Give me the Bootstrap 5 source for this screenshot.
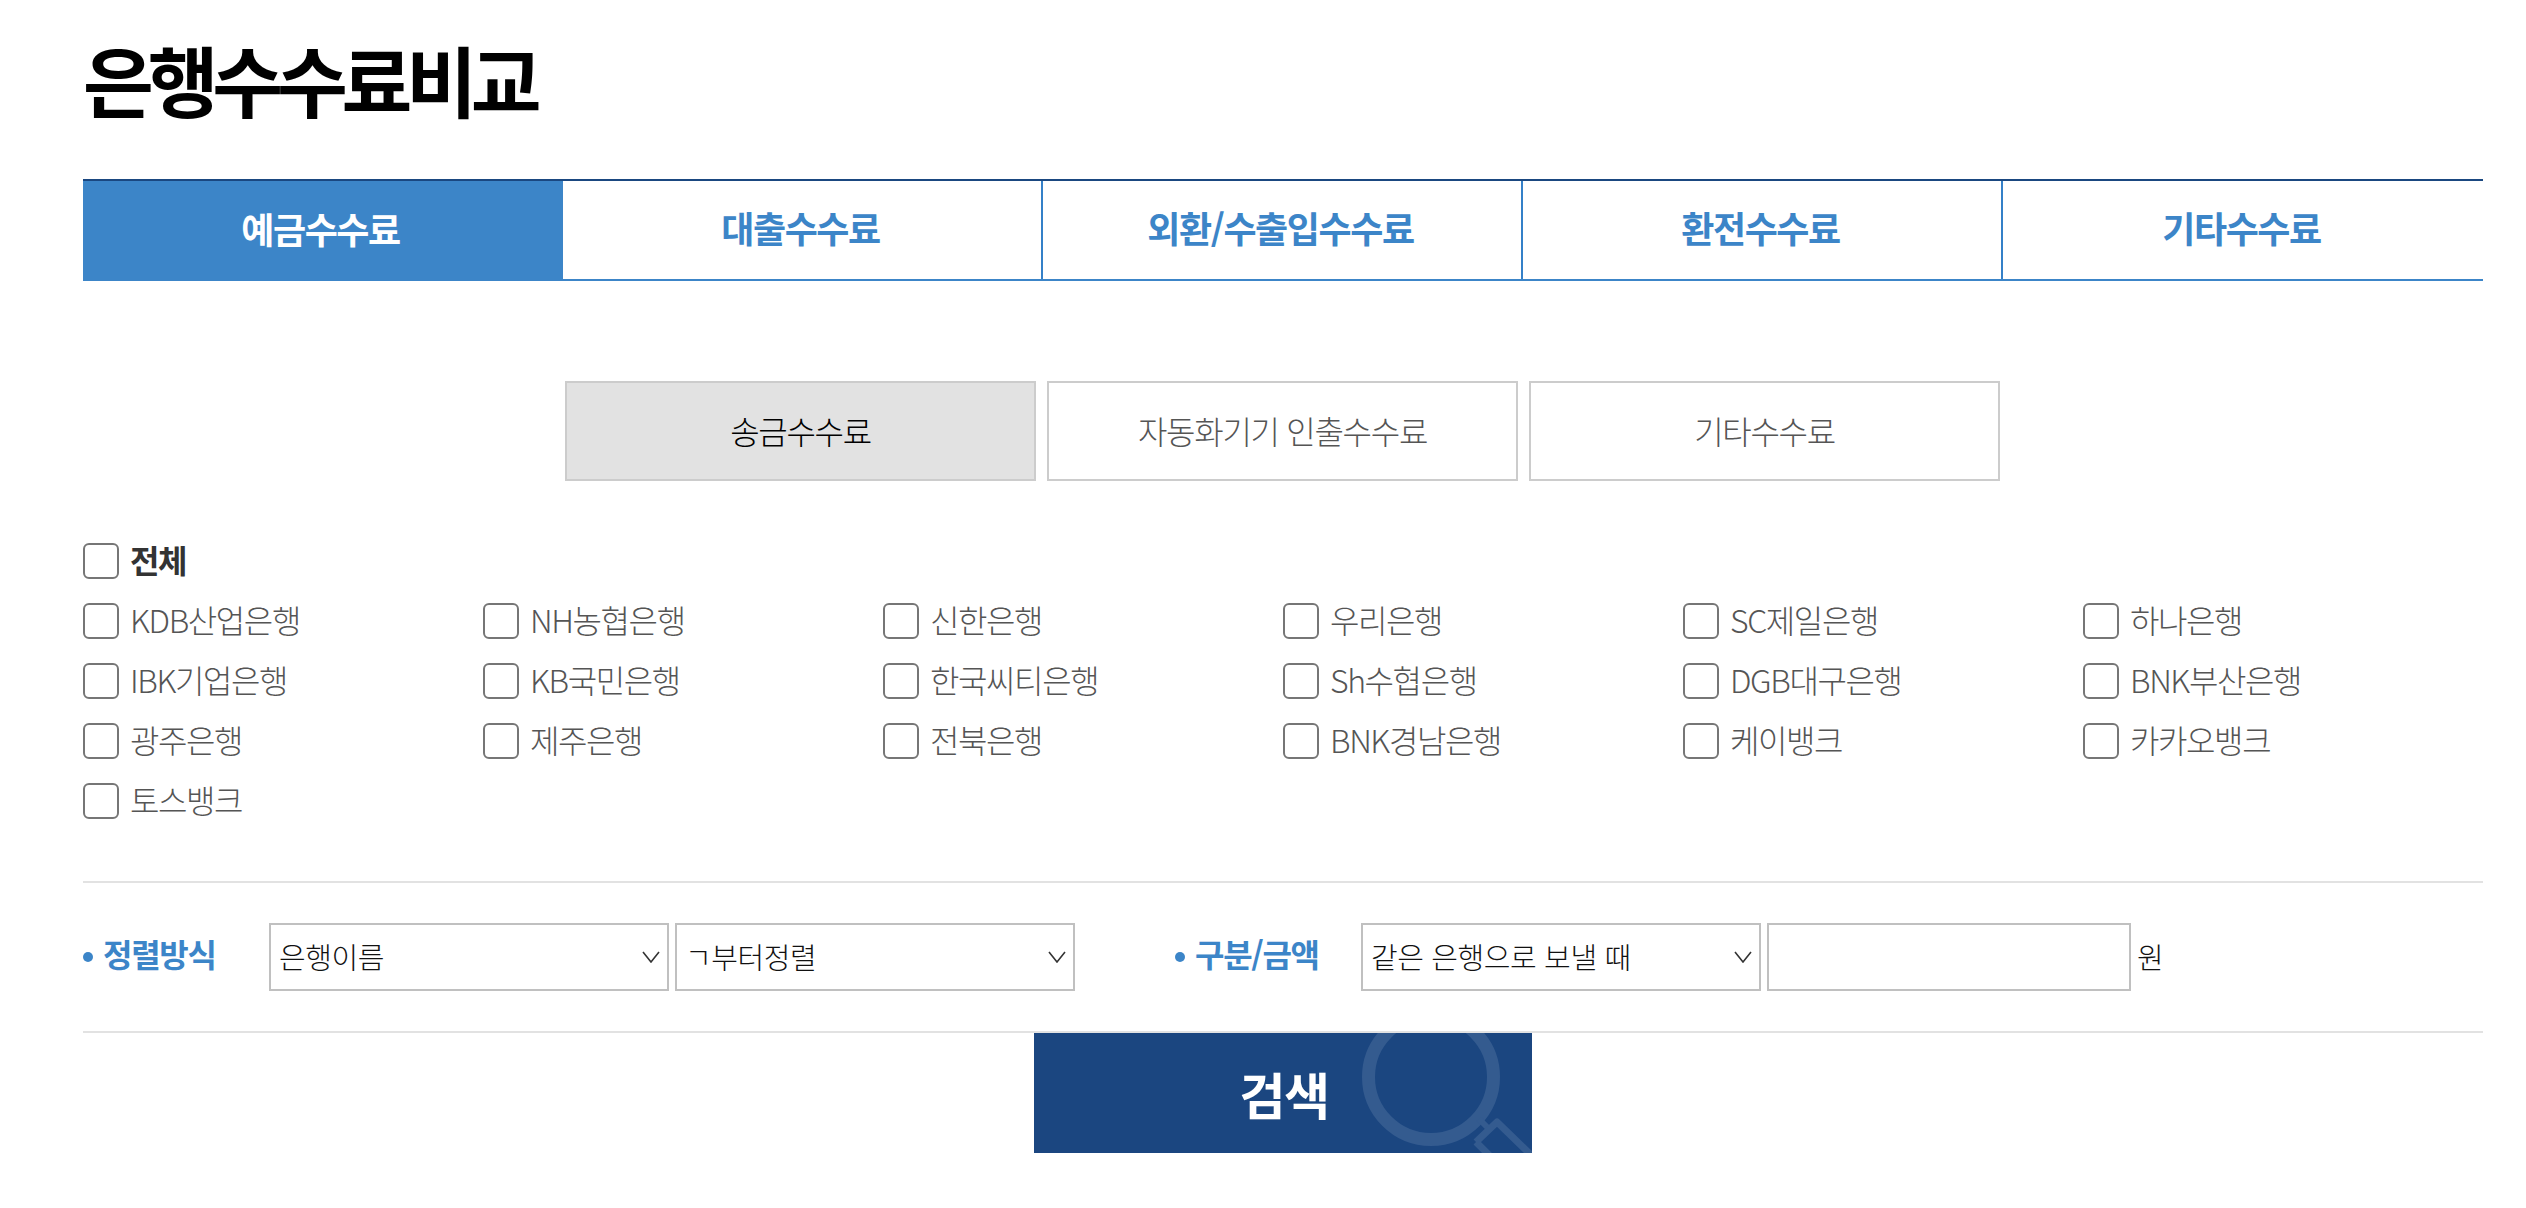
<!DOCTYPE html>
<html lang="ko">
<head>
<meta charset="utf-8">
<title>은행수수료비교</title>
<link href="https://cdn.jsdelivr.net/npm/bootstrap@5.3.0/dist/css/bootstrap.min.css" rel="stylesheet">
<style>
body { font-family: "Noto Sans CJK KR", "Noto Sans", sans-serif; background: #fff; }
.fee-page { width: 2400px; margin-left: 83px; }
.fee-title { font-size: 77px; font-weight: 700; line-height: 77px; letter-spacing: -6.2px; color: #000; padding-top: 40px; margin: 0 0 62px; }
.main-tabs { border-top: 2px solid #1a4780; border-bottom: 2px solid #3c85c8; height: 102px; }
.main-tab { width: 480px; height: 98px; font-size: 36px; font-weight: 700; letter-spacing: -1.4px; color: #3c85c8; border-right: 2px solid #3480c8; text-decoration: none; padding: 0 3px 6px 0; }
.main-tab:last-child { border-right: 0; }
.main-tab.is-on { background: #3c85c8; color: #fff; height: 100px; margin-bottom: -2px; border-right-color: #3c85c8; }
.sub-tabs { gap: 11px; margin-top: 100px; margin-left: 482px; }
.sub-tab { width: 471px; height: 100px; border: 2px solid #ccc; font-size: 32px; letter-spacing: -1.3px; color: #555; font-weight: 300; text-decoration: none; padding-bottom: 3px; }
.sub-tab.is-on { background: #e2e2e2; color: #000; }
.bank-area { margin-top: 50px; }
.bank-item { height: 60px; display: flex; align-items: center; margin: 0; padding: 0; }
.bank-item .form-check-input { width: 36px; height: 36px; margin: 0 11px 0 0; border: 2px solid #767676; border-radius: 6px; float: none; flex: none; }
.bank-item .form-check-label { font-size: 32px; letter-spacing: -1.4px; color: #555; font-weight: 300; line-height: 36px; margin-top: -4px; }
.bank-item .form-check-label.all-label { font-weight: 700; color: #333; }
.filter-bar { border-top: 2px solid #e2e2e2; border-bottom: 2px solid #e2e2e2; height: 152px; margin-top: 50px; }
.filter-label { font-size: 32px; font-weight: 700; letter-spacing: -1.3px; color: #3c85c8; margin: -8px 0 0; white-space: nowrap; }
.filter-label::before { content: ""; display: inline-block; width: 10px; height: 10px; border-radius: 50%; background: #3c85c8; margin-right: 10px; vertical-align: 5px; }
.label-sort { width: 186px; }
.label-kind { width: 186px; margin-left: 100px; }
.filter-bar .form-select { width: 400px; height: 68px; flex: none; border: 2px solid #c0c0c0; border-radius: 0; font-size: 29px; font-weight: 300; letter-spacing: -.4px; color: #111; padding: 0 30px 0 8px; background-size: 20px 12px; background-position: right 6px center; background-image: url("data:image/svg+xml,%3csvg xmlns='http://www.w3.org/2000/svg' viewBox='0 0 20 12'%3e%3cpath fill='none' stroke='%23333' stroke-width='1.6' d='M2 1l8 10 8-10'/%3e%3c/svg%3e"); }
.filter-bar .form-select + .form-select { margin-left: 6px; }
.filter-bar .form-control { width: 364px; height: 68px; flex: none; border: 2px solid #c0c0c0; border-radius: 0; margin-left: 6px; }
.won { font-size: 29px; font-weight: 300; color: #111; margin-left: 6px; }
.search-wrap { margin-left: 951px; }
.search-btn { width: 498px; height: 120px; border: 0; border-radius: 0; background: #1b4680; color: #fff; font-size: 50px; font-weight: 700; letter-spacing: -1.4px; overflow: hidden; position: relative; padding: 0 0 0 2px; margin-top: 0; display: block; }
.search-btn:hover, .search-btn:active { background: #1b4680 !important; color: #fff !important; }
.search-btn svg { position: absolute; left: 0; top: 0; }
.search-btn span { position: relative; }
</style>
</head>
<body>
<main class="fee-page">
  <h1 class="fee-title">은행수수료비교</h1>
  <nav class="main-tabs d-flex">
    <a href="#" class="main-tab is-on d-flex align-items-center justify-content-center">예금수수료</a>
    <a href="#" class="main-tab d-flex align-items-center justify-content-center">대출수수료</a>
    <a href="#" class="main-tab d-flex align-items-center justify-content-center">외환/수출입수수료</a>
    <a href="#" class="main-tab d-flex align-items-center justify-content-center">환전수수료</a>
    <a href="#" class="main-tab d-flex align-items-center justify-content-center">기타수수료</a>
  </nav>
  <div class="sub-tabs d-flex">
    <a href="#" class="sub-tab is-on d-flex align-items-center justify-content-center">송금수수료</a>
    <a href="#" class="sub-tab d-flex align-items-center justify-content-center">자동화기기 인출수수료</a>
    <a href="#" class="sub-tab d-flex align-items-center justify-content-center">기타수수료</a>
  </div>
  <div class="bank-area">
    <div class="form-check bank-item"><input class="form-check-input" type="checkbox" id="b0"><label class="form-check-label all-label" for="b0">전체</label></div>
    <div class="row row-cols-6 g-0">
      <div class="col"><div class="form-check bank-item"><input class="form-check-input" type="checkbox" id="b1"><label class="form-check-label" for="b1">KDB산업은행</label></div></div>
      <div class="col"><div class="form-check bank-item"><input class="form-check-input" type="checkbox" id="b2"><label class="form-check-label" for="b2">NH농협은행</label></div></div>
      <div class="col"><div class="form-check bank-item"><input class="form-check-input" type="checkbox" id="b3"><label class="form-check-label" for="b3">신한은행</label></div></div>
      <div class="col"><div class="form-check bank-item"><input class="form-check-input" type="checkbox" id="b4"><label class="form-check-label" for="b4">우리은행</label></div></div>
      <div class="col"><div class="form-check bank-item"><input class="form-check-input" type="checkbox" id="b5"><label class="form-check-label" for="b5">SC제일은행</label></div></div>
      <div class="col"><div class="form-check bank-item"><input class="form-check-input" type="checkbox" id="b6"><label class="form-check-label" for="b6">하나은행</label></div></div>
      <div class="col"><div class="form-check bank-item"><input class="form-check-input" type="checkbox" id="b7"><label class="form-check-label" for="b7">IBK기업은행</label></div></div>
      <div class="col"><div class="form-check bank-item"><input class="form-check-input" type="checkbox" id="b8"><label class="form-check-label" for="b8">KB국민은행</label></div></div>
      <div class="col"><div class="form-check bank-item"><input class="form-check-input" type="checkbox" id="b9"><label class="form-check-label" for="b9">한국씨티은행</label></div></div>
      <div class="col"><div class="form-check bank-item"><input class="form-check-input" type="checkbox" id="b10"><label class="form-check-label" for="b10">Sh수협은행</label></div></div>
      <div class="col"><div class="form-check bank-item"><input class="form-check-input" type="checkbox" id="b11"><label class="form-check-label" for="b11">DGB대구은행</label></div></div>
      <div class="col"><div class="form-check bank-item"><input class="form-check-input" type="checkbox" id="b12"><label class="form-check-label" for="b12">BNK부산은행</label></div></div>
      <div class="col"><div class="form-check bank-item"><input class="form-check-input" type="checkbox" id="b13"><label class="form-check-label" for="b13">광주은행</label></div></div>
      <div class="col"><div class="form-check bank-item"><input class="form-check-input" type="checkbox" id="b14"><label class="form-check-label" for="b14">제주은행</label></div></div>
      <div class="col"><div class="form-check bank-item"><input class="form-check-input" type="checkbox" id="b15"><label class="form-check-label" for="b15">전북은행</label></div></div>
      <div class="col"><div class="form-check bank-item"><input class="form-check-input" type="checkbox" id="b16"><label class="form-check-label" for="b16">BNK경남은행</label></div></div>
      <div class="col"><div class="form-check bank-item"><input class="form-check-input" type="checkbox" id="b17"><label class="form-check-label" for="b17">케이뱅크</label></div></div>
      <div class="col"><div class="form-check bank-item"><input class="form-check-input" type="checkbox" id="b18"><label class="form-check-label" for="b18">카카오뱅크</label></div></div>
      <div class="col"><div class="form-check bank-item"><input class="form-check-input" type="checkbox" id="b19"><label class="form-check-label" for="b19">토스뱅크</label></div></div>
    </div>
  </div>
  <div class="filter-bar d-flex align-items-center">
    <p class="filter-label label-sort">정렬방식</p>
    <select class="form-select"><option>은행이름</option></select>
    <select class="form-select"><option>ㄱ부터정렬</option></select>
    <p class="filter-label label-kind">구분/금액</p>
    <select class="form-select"><option>같은 은행으로 보낼 때</option></select>
    <input type="text" class="form-control">
    <span class="won">원</span>
  </div>
  <div class="search-wrap">
    <button type="button" class="btn search-btn">
      <svg width="498" height="120" viewBox="0 0 498 120" fill="none" stroke="#345b8f" aria-hidden="true">
        <circle cx="397" cy="44" r="62.5" stroke-width="13"/>
        <path stroke-width="6" d="M445 86l9 9"/>
        <path stroke-width="7" stroke-linejoin="round" d="M442 109l21-20 34 33M442 109l22 22"/>
      </svg>
      <span>검색</span>
    </button>
  </div>
</main>
</body>
</html>
